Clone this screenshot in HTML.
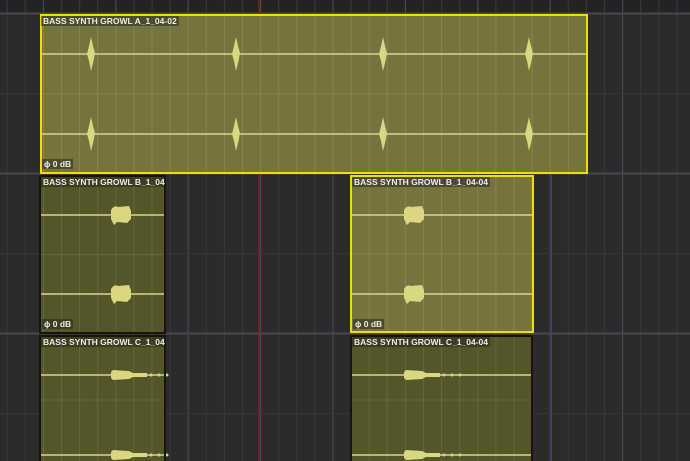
<!DOCTYPE html>
<html><head><meta charset="utf-8"><style>
html,body{margin:0;padding:0;background:#2b2b2d;width:690px;height:461px;overflow:hidden}
#s{position:absolute;left:0;top:0}
.lbl{position:absolute;font:bold 8.5px "Liberation Sans",sans-serif;color:#ecece4;background:rgba(40,40,30,.55);padding:0 2px;line-height:10px;white-space:nowrap;overflow:hidden}
.db{position:absolute;font:bold 8.5px "Liberation Sans",sans-serif;color:#ecece4;background:rgba(40,40,30,.55);padding:0 2px;line-height:10px}
</style></head><body>
<svg id="s" width="690" height="461" xmlns="http://www.w3.org/2000/svg"></svg>
<div class="lbl" style="left:41px;top:16px">BASS SYNTH GROWL A_1_04-02</div>
<div class="db" style="left:42px;top:159px">ϕ 0 dB</div>
<div class="lbl" style="left:41px;top:177px;width:120px">BASS SYNTH GROWL B_1_04-</div>
<div class="db" style="left:42px;top:319px">ϕ 0 dB</div>
<div class="lbl" style="left:352px;top:177px">BASS SYNTH GROWL B_1_04-04</div>
<div class="db" style="left:353px;top:319px">ϕ 0 dB</div>
<div class="lbl" style="left:41px;top:337px;width:120px">BASS SYNTH GROWL C_1_04-</div>
<div class="lbl" style="left:352px;top:337px">BASS SYNTH GROWL C_1_04-04</div>
<script>
const s=document.getElementById('s');let h='';
h+='<rect x="0" y="0" width="690" height="14" fill="#232325"/>';
for(let k=-20;k<40;k++){const x=333+18.1*k;if(x<0||x>690)continue;const strong=k%4==0;
h+=`<line x1="${x}" y1="0" x2="${x}" y2="461" stroke="${strong?'#48484e':'#37373a'}" stroke-width="1.2"/>`;}
[13.5,173.5,333.5].forEach(y=>h+=`<line x1="0" y1="${y}" x2="690" y2="${y}" stroke="#48484c" stroke-width="2"/>`);
[93.5,253.5,413.5].forEach(y=>h+=`<line x1="0" y1="${y}" x2="690" y2="${y}" stroke="#363639" stroke-width="1"/>`);
h+='<line x1="259" y1="0" x2="259" y2="461" stroke="#9b1b22" stroke-width="1.2"/>';
h+='<line x1="551.5" y1="175" x2="551.5" y2="461" stroke="#5a22c8" stroke-width="1"/>';
function clip(x,y,w,hh,sel,waves,type){
 h+=`<rect x="${x}" y="${y}" width="${w}" height="${hh}" fill="${sel?'#77733f':'#545629'}"/>`;
 for(let k=-20;k<40;k++){const lx=333+18.1*k;if(lx<=x+1||lx>=x+w-1)continue;h+=`<line x1="${lx}" y1="${y}" x2="${lx}" y2="${y+hh}" stroke="${sel?'#888553':'#65673c'}" stroke-width="1"/>`;}
 h+=`<line x1="${x}" y1="${y+hh/2}" x2="${x+w}" y2="${y+hh/2}" stroke="${sel?'#888553':'#65673c'}" stroke-width="1"/>`;
 waves.forEach(wy=>{h+=`<line x1="${x}" y1="${wy}" x2="${x+w}" y2="${wy}" stroke="#d8d590" stroke-width="1.5"/>`;
  type(wy);});
 h+=`<rect x="${x+1}" y="${y+1}" width="${w-2}" height="${hh-2}" fill="none" stroke="${sel?'#f0e000':'#15150c'}" stroke-width="2"/>`;
}
const spike=cx=>wy=>h+=`<path d="M${cx} ${wy-17} L${cx+2} ${wy-8} L${cx+4} ${wy-1} L${cx+2.5} ${wy+7} L${cx} ${wy+17} L${cx-2} ${wy+7} L${cx-4} ${wy} L${cx-2} ${wy-8}Z" fill="#d9d77f"/>`;
const blob=cx=>wy=>h+=`<path d="M${cx-10} ${wy-5} Q${cx-7} ${wy-10} ${cx-3} ${wy-8} L${cx+8} ${wy-9} L${cx+10} ${wy-4} L${cx+10} ${wy+4} L${cx+6} ${wy+8} L${cx-4} ${wy+7} L${cx-7} ${wy+10} L${cx-10} ${wy+4}Z" fill="#d9d77f"/>`;
const smear=cx=>wy=>{h+=`<path d="M${cx-10} ${wy-3} L${cx-8} ${wy-5} L${cx+8} ${wy-4} L${cx+12} ${wy-2} L${cx+26} ${wy-2} L${cx+26} ${wy+2} L${cx+12} ${wy+2} L${cx+8} ${wy+4} L${cx-8} ${wy+5} L${cx-10} ${wy+3}Z" fill="#d9d77f"/>`;
 [30,38,46].forEach(d=>h+=`<circle cx="${cx+d}" cy="${wy}" r="1.5" fill="#d9d77f"/>`);};
clip(40,14,548,160,true,[54,134],wy=>[91,236,383,529].forEach(c=>spike(c)(wy)));
clip(39,175,127,159,false,[215,294],blob(121));
clip(350,175,184,158,true,[215,294],blob(414));
clip(39,335,127,130,false,[375,455],smear(121));
clip(350,335,183,130,false,[375,455],smear(414));
s.innerHTML=h;
</script>
</body></html>
